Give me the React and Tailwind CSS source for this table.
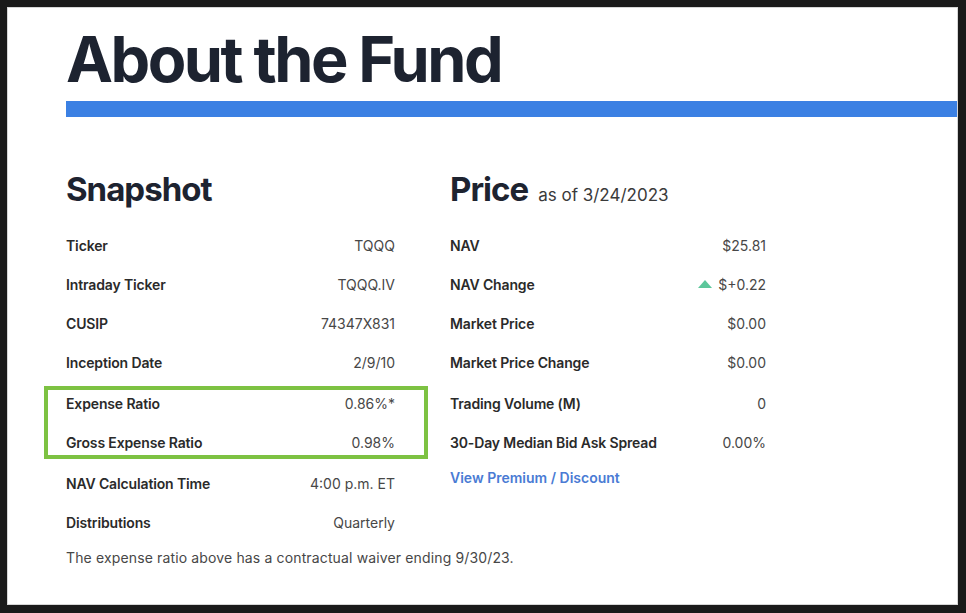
import React from "react";

const snapshot = [
  ["Ticker", "TQQQ"],
  ["Intraday Ticker", "TQQQ.IV"],
  ["CUSIP", "74347X831"],
  ["Inception Date", "2/9/10"],
];

const snapshotAfter = [
  ["NAV Calculation Time", "4:00 p.m. ET"],
  ["Distributions", "Quarterly"],
];

const Row = ({ label, value, children }) => (
  <div className="flex h-[26px] items-center justify-between">
    <span className="text-[14px] font-semibold tracking-[-0.01em] text-[#2a2a2a]">
      {label}
    </span>
    <span className="flex items-center gap-[6px] text-[14px] text-[#474747]">
      {children}
      {value}
    </span>
  </div>
);

const App = () => {
  return (
    <div className="h-screen w-full bg-[#1a1a1a] pt-[7px] pl-[7px] pr-[8px] pb-[8px] font-['Inter',sans-serif]">
      <div className="h-full w-full overflow-hidden border border-[#d6d6d6] bg-white pt-[15px] pl-[58px]">
        {/*Title*/}
        <h1 className="text-[63px] font-bold leading-[72px] tracking-[-0.04em] text-[#1d2330]">
          About the Fund
        </h1>
        <div className="mt-[6px] h-[16px] bg-[#3b80e3]" />

        <div className="mt-[47px] flex">
          {/*Snapshot*/}
          <div className="w-[329px]">
            <h2 className="h-[50px] text-[33px] font-bold leading-[50px] tracking-[-0.03em] text-[#1d2330]">
              Snapshot
            </h2>
            <div className="mt-[18px] flex flex-col gap-[13px]">
              {snapshot.map(([l, v]) => (
                <Row key={l} label={l} value={v} />
              ))}
              <div className="-mt-[2px] -mb-[2px] -ml-[22px] -mr-[33px] flex flex-col gap-[13px] border-4 border-[#7dc242] pl-[18px] pr-[29px]">
                <Row label="Expense Ratio" value="0.86%*" />
                <Row label="Gross Expense Ratio" value="0.98%" />
              </div>
              {snapshotAfter.map(([l, v]) => (
                <Row key={l} label={l} value={v} />
              ))}
            </div>
            <p className="mt-[12px] w-[520px] text-[14px] tracking-[0.01em] text-[#474747]">
              The expense ratio above has a contractual waiver ending 9/30/23.
            </p>
          </div>

          {/*Price*/}
          <div className="ml-[55px] w-[316px]">
            <h2 className="flex h-[50px] items-baseline gap-[10px] leading-[50px] text-[#1d2330]">
              <span className="text-[33px] font-bold tracking-[-0.03em]">Price</span>
              <span className="text-[17px] text-[#3a3a3a]">as of 3/24/2023</span>
            </h2>
            <div className="mt-[18px] flex flex-col gap-[13px]">
              <Row label="NAV" value="$25.81" />
              <Row label="NAV Change" value="$+0.22">
                <svg width="14" height="8" viewBox="0 0 14 8">
                  <path d="M7 0 L14 8 L0 8 Z" fill="#5cc79b" />
                </svg>
              </Row>
              <Row label="Market Price" value="$0.00" />
              <Row label="Market Price Change" value="$0.00" />
              <div className="mt-[2px]">
                <Row label="Trading Volume (M)" value="0" />
              </div>
              <Row label="30-Day Median Bid Ask Spread" value="0.00%" />
              <a href="#" className="-mt-[1px] text-[14px] font-semibold text-[#4a7bd4]">
                View Premium / Discount
              </a>
            </div>
          </div>
        </div>
      </div>
    </div>
  );
};

export default App;
